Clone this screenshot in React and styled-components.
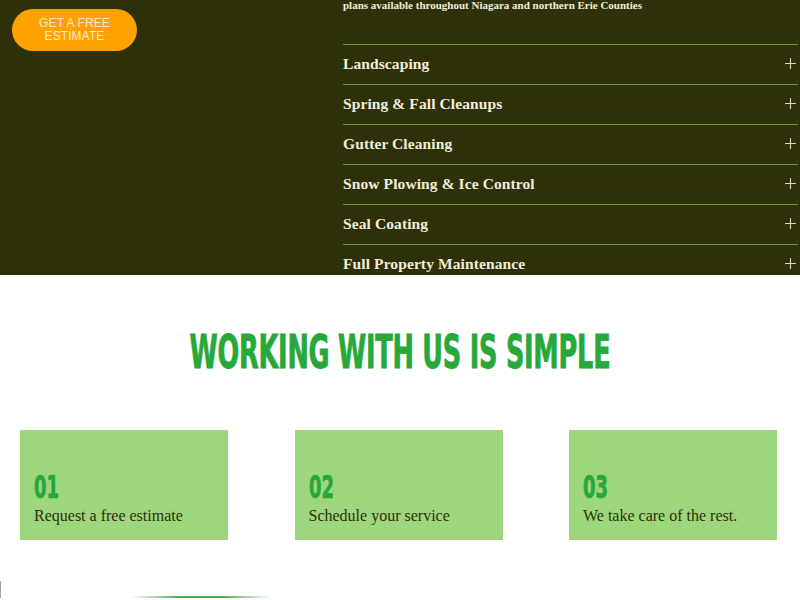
import React from "react";
import styled, { createGlobalStyle } from "styled-components";

const Global = createGlobalStyle`
  html, body { margin: 0; padding: 0; background: #ffffff; }
  body { width: 800px; height: 600px; overflow: hidden; font-family: "Liberation Serif", serif; }
  * { box-sizing: border-box; }
`;

const Page = styled.div`
  width: 800px;
  height: 600px;
  overflow: hidden;
  position: relative;
`;

const Hero = styled.section`
  height: 275px;
  background: #2e3008;
  display: grid;
  grid-template-columns: 343px 1fr;
  overflow: hidden;
`;

const LeftCol = styled.div`
  padding: 9px 0 0 12px;
`;

const EstimateButton = styled.button`
  width: 125px;
  height: 42px;
  border: none;
  border-radius: 21px;
  background: #ffa200;
  color: #fdebcb;
  font-family: "Liberation Sans", Arial, sans-serif;
  font-size: 12px;
  line-height: 13px;
  letter-spacing: 0.1px;
  text-transform: uppercase;
  padding: 0 14px 0;
  cursor: pointer;
`;

const RightCol = styled.div`
  padding-right: 2px;
  display: flex;
  flex-direction: column;
`;

const Intro = styled.p`
  margin: 0;
  font-size: 11px;
  line-height: 11px;
  font-weight: 700;
  color: #f1eddc;
  height: 44px;
`;

const Item = styled.div`
  height: 40px;
  flex: none;
  border-top: 1px solid #6c9a3f;
  display: flex;
  align-items: center;
  justify-content: space-between;
  padding-bottom: 2px;
  color: #f1eddc;
`;

const ItemLabel = styled.span`
  font-size: 15.5px;
  font-weight: 700;
  letter-spacing: 0.1px;
`;

const Plus = styled.svg`
  width: 11px;
  height: 11px;
  margin-right: 2px;
`;

const Simple = styled.section`
  padding-top: 54px;
`;

const Heading = styled.h2`
  margin: 0;
  text-align: center;
  color: #27a83a;
  font-family: "DejaVu Sans Condensed", "DejaVu Sans", sans-serif;
  font-weight: 700;
  font-size: 40px;
  line-height: 46px;
  letter-spacing: -0.3px;
  -webkit-text-stroke: 0.8px #27a83a;
  transform: scale(0.71, 1.14);
`;

const Cards = styled.div`
  margin-top: 55px;
  padding: 0 23px 0 20px;
  display: grid;
  grid-template-columns: repeat(3, 208px);
  justify-content: space-between;
`;

const Card = styled.div`
  height: 110px;
  background: #9dd67c;
  padding: 43px 14px 0;
`;

const Num = styled.div`
  color: #25a83a;
  font-family: "DejaVu Sans Condensed", "DejaVu Sans", sans-serif;
  font-weight: 700;
  font-size: 27px;
  line-height: 30px;
  -webkit-text-stroke: 0.6px #25a83a;
  transform: scale(0.74, 1.16);
  transform-origin: left center;
`;

const CardText = styled.div`
  margin-top: 4px;
  color: #2e3008;
  font-size: 16px;
  line-height: 18px;
`;

const Foot = styled.div`
  margin-top: 41px;
  display: flex;
  align-items: flex-end;
  height: 17px;
`;

const EdgeMark = styled.div`
  width: 1px;
  height: 17px;
  background: #a0a0a0;
`;

const GlowLine = styled.div`
  margin-left: 130px;
  width: 140px;
  height: 2px;
  background: linear-gradient(90deg, rgba(76,170,80,0) 0%, #4caa50 35%, #4caa50 65%, rgba(76,170,80,0) 100%);
`;

const services = [
  "Landscaping",
  "Spring & Fall Cleanups",
  "Gutter Cleaning",
  "Snow Plowing & Ice Control",
  "Seal Coating",
  "Full Property Maintenance",
];

const steps = [
  ["01", "Request a free estimate"],
  ["02", "Schedule your service"],
  ["03", "We take care of the rest."],
];

export default function App() {
  return (
    <Page>
      <Global />
      <Hero>
        <LeftCol>
          <EstimateButton>Get a free<br />estimate</EstimateButton>
        </LeftCol>
        <RightCol>
          <Intro>plans available throughout Niagara and northern Erie Counties</Intro>
          {services.map((s) => (
            <Item key={s}>
              <ItemLabel>{s}</ItemLabel>
              <Plus viewBox="0 0 11 11">
                <path d="M5.5 0V11M0 5.5H11" stroke="#d8d6c8" strokeWidth="1.1" />
              </Plus>
            </Item>
          ))}
        </RightCol>
      </Hero>
      <Simple>
        <Heading>WORKING WITH US IS SIMPLE</Heading>
        <Cards>
          {steps.map(([n, t]) => (
            <Card key={n}>
              <Num>{n}</Num>
              <CardText>{t}</CardText>
            </Card>
          ))}
        </Cards>
        <Foot>
          <EdgeMark />
          <GlowLine />
        </Foot>
      </Simple>
    </Page>
  );
}
